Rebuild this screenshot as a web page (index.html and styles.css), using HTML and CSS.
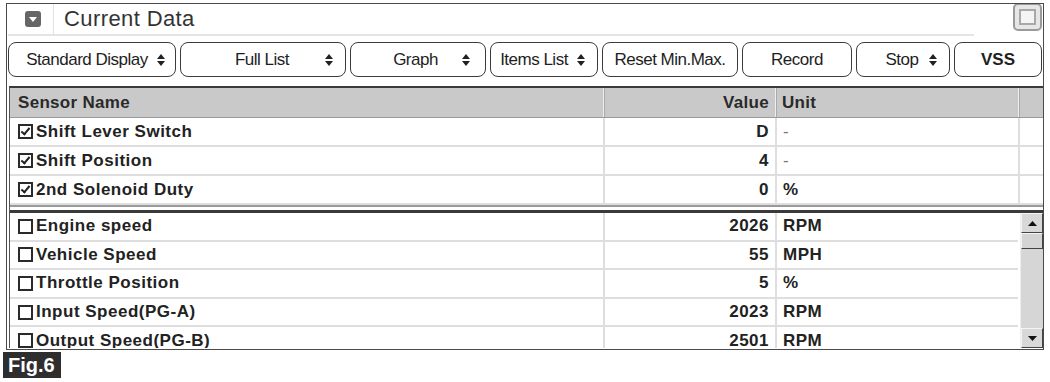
FILE: index.html
```html
<!DOCTYPE html>
<html lang="en">
<head>
    <meta charset="UTF-8">
    <title>Current Data - Fig.6</title>
    <link rel="stylesheet" href="styles.css">
</head>
<body>
    <div class="panel">
        <div class="titlebar">
            <div class="title-left">
                <span class="collapse">
                    <svg width="16" height="16" viewBox="0 0 16 16"><path d="M4 6 L12 6 L8 11 Z" fill="#fff"/></svg>
                </span>
                <h1 class="title">Current Data</h1>
            </div>
            <span class="maximize"><span class="maximize-inner"></span></span>
        </div>

        <div class="toolbar">
            <button class="btn btn-std"><span class="label">Standard Display</span><svg class="updown" viewBox="0 0 8 12"><path d="M0 5 L8 5 L4 0 Z M0 7 L8 7 L4 12 Z" fill="#222"/></svg></button>
            <button class="btn btn-full"><span class="label">Full List</span><svg class="updown" viewBox="0 0 8 12"><path d="M0 5 L8 5 L4 0 Z M0 7 L8 7 L4 12 Z" fill="#222"/></svg></button>
            <button class="btn btn-graph"><span class="label">Graph</span><svg class="updown" viewBox="0 0 8 12"><path d="M0 5 L8 5 L4 0 Z M0 7 L8 7 L4 12 Z" fill="#222"/></svg></button>
            <button class="btn btn-items"><span class="label">Items List</span><svg class="updown" viewBox="0 0 8 12"><path d="M0 5 L8 5 L4 0 Z M0 7 L8 7 L4 12 Z" fill="#222"/></svg></button>
            <button class="btn btn-reset"><span class="label">Reset Min.Max.</span></button>
            <button class="btn btn-record"><span class="label">Record</span></button>
            <button class="btn btn-stop"><span class="label">Stop</span><svg class="updown" viewBox="0 0 8 12"><path d="M0 5 L8 5 L4 0 Z M0 7 L8 7 L4 12 Z" fill="#222"/></svg></button>
            <button class="btn btn-vss"><span class="label">VSS</span></button>
        </div>

        <div class="table">
            <div class="pinned">
                <div class="row head">
                    <div class="cell name">Sensor Name</div>
                    <div class="cell value">Value</div>
                    <div class="cell unit">Unit</div>
                    <div class="cell extra"></div>
                </div>
                <div class="row">
                    <div class="cell name"><span class="cb checked"></span>Shift Lever Switch</div>
                    <div class="cell value">D</div>
                    <div class="cell unit"><span class="dash">-</span></div>
                    <div class="cell extra"></div>
                </div>
                <div class="row">
                    <div class="cell name"><span class="cb checked"></span>Shift Position</div>
                    <div class="cell value">4</div>
                    <div class="cell unit"><span class="dash">-</span></div>
                    <div class="cell extra"></div>
                </div>
                <div class="row">
                    <div class="cell name"><span class="cb checked"></span>2nd Solenoid Duty</div>
                    <div class="cell value">0</div>
                    <div class="cell unit">%</div>
                    <div class="cell extra"></div>
                </div>
            </div>

            <div class="list">
                <div class="list-rows">
                    <div class="row">
                        <div class="cell name"><span class="cb"></span>Engine speed</div>
                        <div class="cell value">2026</div>
                        <div class="cell unit">RPM</div>
                    </div>
                    <div class="row">
                        <div class="cell name"><span class="cb"></span>Vehicle Speed</div>
                        <div class="cell value">55</div>
                        <div class="cell unit">MPH</div>
                    </div>
                    <div class="row">
                        <div class="cell name"><span class="cb"></span>Throttle Position</div>
                        <div class="cell value">5</div>
                        <div class="cell unit">%</div>
                    </div>
                    <div class="row">
                        <div class="cell name"><span class="cb"></span>Input Speed(PG-A)</div>
                        <div class="cell value">2023</div>
                        <div class="cell unit">RPM</div>
                    </div>
                    <div class="row">
                        <div class="cell name"><span class="cb"></span>Output Speed(PG-B)</div>
                        <div class="cell value">2501</div>
                        <div class="cell unit">RPM</div>
                    </div>
                </div>
                <div class="scrollbar">
                    <span class="sb-btn">
                        <svg width="9" height="5" viewBox="0 0 9 5"><path d="M0 5 L9 5 L4.5 0 Z" fill="#111"/></svg>
                    </span>
                    <span class="sb-thumb"></span>
                    <span class="sb-track"></span>
                    <span class="sb-btn">
                        <svg width="9" height="5" viewBox="0 0 9 5"><path d="M0 0 L9 0 L4.5 5 Z" fill="#111"/></svg>
                    </span>
                </div>
            </div>
        </div>
    </div>
    <div class="fig">Fig.6</div>
</body>
</html>
```

FILE: styles.css
```css
body {
    margin: 0;
    background: #fff;
    font-family: "Liberation Sans", Arial, sans-serif;
    color: #222;
}
.panel {
    box-sizing: border-box;
    width: 1038px;
    height: 347px;
    margin: 3px 0 0 6px;
    border: 1px solid #4a4a4a;
    overflow: hidden;
}
.titlebar {
    display: flex;
    height: 32px;
}
.title-left {
    flex: 1;
    display: flex;
    align-items: center;
    margin: 0 39px 0 1px;
    border-bottom: 2px solid #e4e4e4;
}
.collapse {
    width: 16px;
    height: 16px;
    margin-left: 17px;
    background: #666;
    border-radius: 3px;
    display: flex;
}
.title {
    margin: 0 0 0 12px;
    padding-left: 10px;
    height: 100%;
    display: flex;
    align-items: center;
    border-left: 1px solid #e2e2e2;
    font-size: 22px;
    font-weight: normal;
    letter-spacing: 0.4px;
    color: #333;
}
.maximize {
    box-sizing: border-box;
    width: 29px;
    height: 28px;
    margin-top: -1px;
    margin-right: 1px;
    border: 2px solid #9a9a9a;
    border-radius: 5px;
    background: #e6e6e6;
    display: flex;
    align-items: center;
    justify-content: center;
}
.maximize-inner {
    box-sizing: border-box;
    width: 17px;
    height: 16px;
    border: 2px solid #a8a8a8;
    background: #f4f4f4;
}

.toolbar {
    display: flex;
    gap: 4px;
    margin: 6px 0 0 1px;
    height: 35px;
}
.btn {
    box-sizing: border-box;
    height: 35px;
    display: flex;
    align-items: center;
    padding: 0 12px 0 22px;
    background: #fff;
    border: 1.5px solid #3c3c3c;
    border-radius: 8px;
    font-family: "Liberation Sans", Arial, sans-serif;
    font-size: 17px;
    letter-spacing: -0.5px;
    color: #1e1e1e;
}
.btn .label {
    flex: 1;
    text-align: center;
    white-space: nowrap;
}
.updown {
    width: 8px;
    height: 12px;
    margin-left: 4px;
    flex: none;
}
.btn-std { width: 168px; padding-left: 12px; padding-right: 10px; }
.btn-full { width: 166px; }
.btn-graph { width: 136px; padding-right: 15px; }
.btn-items { width: 108px; padding-left: 4px; padding-right: 12px; }
.btn-reset { width: 136px; padding: 0 4px; }
.btn-record { width: 110px; padding: 0 4px; }
.btn-stop { width: 94px; }
.btn-vss { width: 88px; padding: 0 4px; font-weight: bold; letter-spacing: 0; }

.table {
    margin: 9px 0 0 2px;
    border-top: 2px solid #3a3a3a;
    border-left: 1px solid #555;
}
.row {
    display: grid;
    grid-template-columns: 593px 172px 243px 1fr;
    height: 29px;
    border-bottom: 2px solid #dedede;
    box-sizing: border-box;
    font-size: 17px;
    font-weight: bold;
    letter-spacing: 0.5px;
}
.cell {
    display: flex;
    align-items: center;
    white-space: nowrap;
    overflow: hidden;
}
.cell.name {
    padding-left: 8px;
}
.cell.value {
    justify-content: flex-end;
    padding-right: 6px;
    border-left: 2px solid #dedede;
}
.cell.unit {
    padding-left: 6px;
    border-left: 2px solid #dedede;
}
.cell.extra {
    border-left: 2px solid #dedede;
}
.dash {
    font-weight: normal;
    color: #777;
}
.row.head {
    background: #c9c9c9;
    border-bottom: 1px solid #9a9a9a;
    height: 30px;
    letter-spacing: 0.3px;
    color: #2a2a2a;
}
.row.head .cell.value,
.row.head .cell.unit,
.row.head .cell.extra {
    border-left: 1px solid #eee;
    box-shadow: inset 1px 0 0 #aaa;
}
.pinned {
    border-bottom: 2px solid #9a9a9a;
}
.cb {
    box-sizing: border-box;
    width: 15px;
    height: 15px;
    margin-right: 3px;
    border: 2px solid #2a2a2a;
    flex: none;
}
.cb.checked {
    position: relative;
}
.cb.checked::after {
    content: "";
    position: absolute;
    left: 3px;
    top: 0;
    width: 3px;
    height: 7px;
    border: solid #222;
    border-width: 0 2px 2px 0;
    transform: rotate(40deg);
}

.list {
    display: flex;
    height: 135px;
    margin-top: 3px;
    border-top: 3px solid #3a3a3a;
}
.list-rows {
    flex: 1;
    overflow: hidden;
}
.list .row {
    grid-template-columns: 593px 172px 243px;
    height: 28.6px;
}
.scrollbar {
    width: 22px;
    margin-left: 2px;
    background: #d6d6d6;
    border-left: 1px solid #eee;
    display: flex;
    flex-direction: column;
}
.sb-btn {
    box-sizing: border-box;
    height: 20px;
    background: #d8d8d8;
    border: 1px solid;
    border-color: #f4f4f4 #444 #444 #f4f4f4;
    display: flex;
    align-items: center;
    justify-content: center;
}
.sb-thumb {
    box-sizing: border-box;
    height: 16px;
    background: #d4d4d4;
    border: 1px solid;
    border-color: #f4f4f4 #444 #444 #f4f4f4;
}
.sb-track {
    flex: 1;
}

.fig {
    display: inline-block;
    margin: 2px 0 0 3px;
    padding: 3px 6px 3px 5px;
    background: #2e2e2e;
    color: #fff;
    font-weight: bold;
    font-size: 20px;
    line-height: 20px;
}
```
